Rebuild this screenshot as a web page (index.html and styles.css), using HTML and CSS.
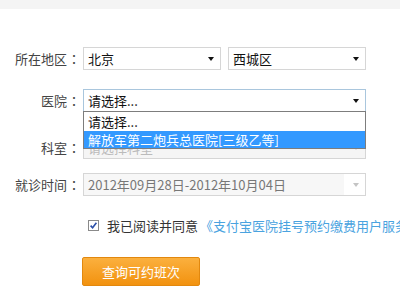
FILE: index.html
```html
<!DOCTYPE html>
<html>
<head>
<meta charset="utf-8">
<link rel="stylesheet" href="styles.css">
</head>
<body>
<div class="topband"></div>
<div class="form">
  <div class="row row1">
    <div class="label">所在地区<span class="colon">：</span></div>
    <div class="sel sel-half"><span>北京</span><i class="arrow"></i></div>
    <div class="sel sel-half sel-gap"><span>西城区</span><i class="arrow"></i></div>
  </div>
  <div class="row row2">
    <div class="label">医院<span class="colon">：</span></div>
    <div class="sel sel-full sel-focus"><span>请选择...</span><i class="arrow"></i>
      <ul class="list">
        <li class="opt">请选择...</li>
        <li class="opt opt-hi">解放军第二炮兵总医院[三级乙等]</li>
      </ul>
    </div>
  </div>
  <div class="row row3">
    <div class="label">科室<span class="colon">：</span></div>
    <div class="sel sel-full sel-dis"><span>请选择科室</span><i class="arrow arrow-dis"></i></div>
  </div>
  <div class="row row4">
    <div class="label">就诊时间<span class="colon">：</span></div>
    <div class="sel sel-full sel-date"><span>2012年09月28日-2012年10月04日</span><i class="arrow arrow-dis"></i></div>
  </div>
  <div class="agree">
    <svg class="check" width="11" height="11" viewBox="0 0 11 11"><rect x="0.5" y="0.5" width="10" height="10" fill="#fff" stroke="#8a8a8a"/><path d="M2.6 5.6 L4.6 7.8 L8.4 2.8" fill="none" stroke="#2b4fa8" stroke-width="1.6"/></svg>
    <span class="agree-text">我已阅读并同意</span>
    <span class="link">《支付宝医院挂号预约缴费用户服务协议》</span>
  </div>
  <div class="btnrow">
    <div class="btn">查询可约班次</div>
  </div>
</div>
</body>
</html>
```

FILE: styles.css
```css
html, body {
  margin: 0;
  padding: 0;
  background: #fff;
  overflow: hidden;
  width: 400px;
  height: 300px;
}
body {
  font-family: "Noto Sans CJK SC", "Microsoft YaHei", sans-serif;
  font-size: 13px;
  color: #333;
}
.topband {
  height: 9px;
  background: #f4f4f4;
}
.form {
  width: 400px;
}
.row {
  display: flex;
  align-items: center;
  height: 23px;
}
.row1 { margin-top: 38px; }
.row2 { margin-top: 19px; position: relative; z-index: 2; }
.row3 { margin-top: 24px; }
.row4 { margin-top: 14px; }
.label {
  width: 81px;
  text-align: right;
  white-space: nowrap;
  color: #444;
  line-height: 23px;
}
.colon {
  display: inline-block;
  width: 14px;
  text-align: center;
  font-family: "Noto Sans CJK TC", "Noto Sans CJK SC", sans-serif;
}
.sel {
  position: relative;
  box-sizing: border-box;
  height: 23px;
  margin-left: 2px;
  border: 1px solid #d6d6d6;
  background: #fff;
  color: #111;
  display: flex;
  align-items: center;
  padding-left: 4px;
  line-height: 21px;
  white-space: nowrap;
}
.sel-half { width: 138px; }
.sel-gap { margin-left: 7px; }
.sel-full { width: 283px; }
.sel-focus { border-color: #a9c6dd; }
.sel-dis {
  background: #f5f5f5;
  color: #bbb;
}
.sel-date {
  background: linear-gradient(to right, #f7f7f7 0, #f7f7f7 260px, #fff 260px);
  color: #777;
}
.arrow {
  position: absolute;
  right: 6px;
  top: 9px;
  width: 0;
  height: 0;
  border-left: 3px solid transparent;
  border-right: 3px solid transparent;
  border-top: 4px solid #111;
}
.arrow-dis { border-top-color: #c4c4c4; }
.list {
  position: absolute;
  left: -1px;
  top: 21px;
  width: 283px;
  box-sizing: border-box;
  margin: 0;
  padding: 0;
  list-style: none;
  border: 1px solid #7d7d7d;
  background: #fff;
}
.opt {
  height: 19px;
  line-height: 19px;
  padding-left: 4px;
  color: #111;
}
.opt-hi {
  height: 17px;
  line-height: 17px;
  background: #3399ff;
  color: #fff;
}
.agree {
  display: flex;
  align-items: center;
  height: 16px;
  margin-top: 21px;
  padding-left: 88px;
  white-space: nowrap;
}
.check { flex: none; }
.agree-text {
  margin-left: 8px;
  color: #333;
}
.link {
  margin-left: 2px;
  color: #4aa3df;
}
.btnrow {
  margin-top: 24px;
  padding-left: 82px;
}
.btn {
  width: 118px;
  height: 29px;
  box-sizing: border-box;
  border: 1px solid #e2880e;
  border-radius: 2px;
  background: linear-gradient(#fbb03e, #f2920f);
  color: #fff;
  text-align: center;
  line-height: 27px;
  font-size: 13px;
}
```
